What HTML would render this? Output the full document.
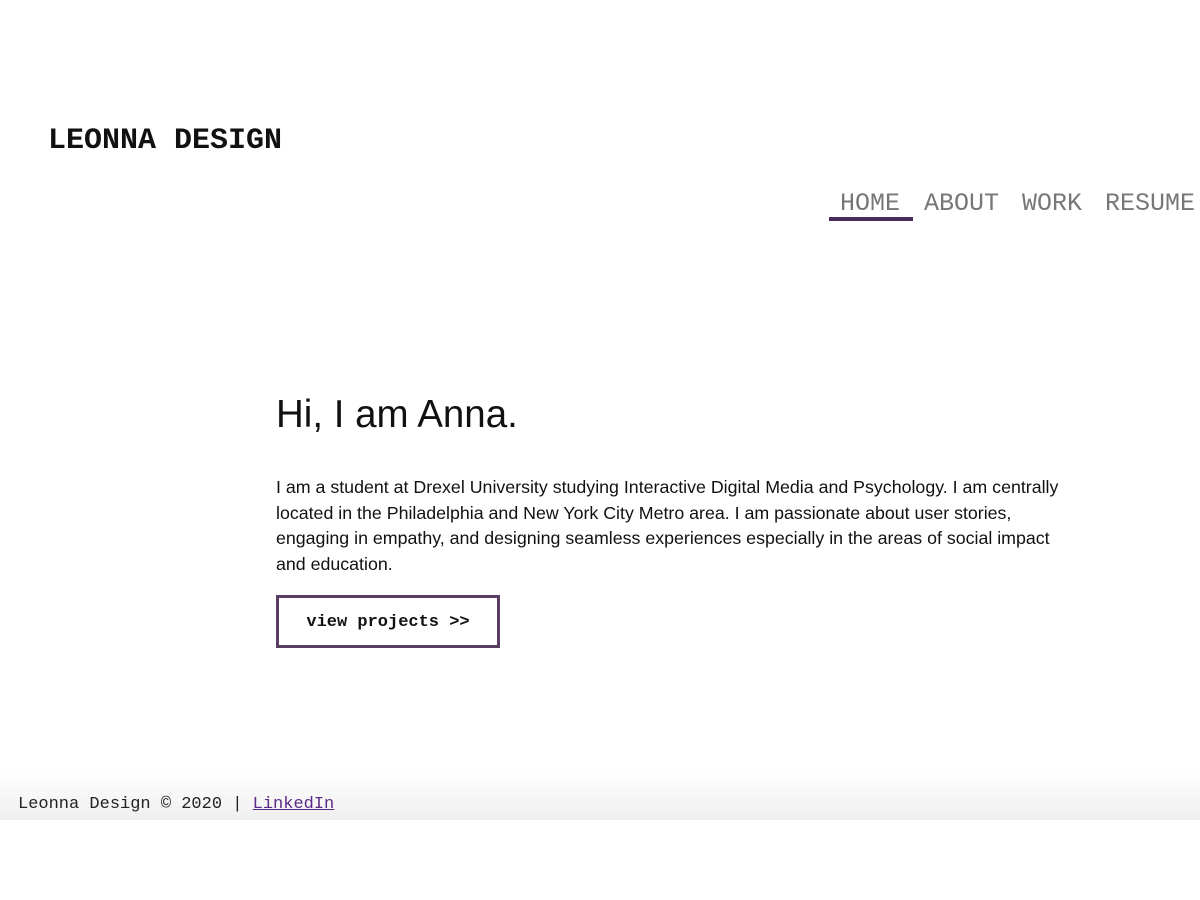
<!DOCTYPE html>
<html><head><style>
body{margin:0;width:1200px;height:900px;background:#fff;position:relative;overflow:hidden;font-family:"Liberation Sans",sans-serif}
.logo{position:absolute;left:48px;top:121px;font:bold 30px/40px "Liberation Mono",monospace;color:#111}
.nav a{position:absolute;top:187px;font:25px/34px "Liberation Mono",monospace;color:#777;text-decoration:none;white-space:pre}
.ul{position:absolute;left:829px;top:217px;width:84px;height:4px;background:#4a2a57}
h1{position:absolute;left:276px;top:393px;margin:0;font-size:38.5px;font-weight:500;line-height:44px;color:#111}
p{position:absolute;left:276px;top:475px;margin:0;width:795px;font-size:17.8px;line-height:25.5px;color:#111}
.btn{position:absolute;left:276px;top:595px;width:218px;height:47px;border:3px solid #5a3d63;font:bold 17px/49px "Liberation Mono",monospace;text-align:center;color:#111}
.foot{position:absolute;left:0;top:770px;width:1200px;height:50px;background:linear-gradient(to bottom,#fff,#efefef)}
.ft{position:absolute;left:18px;top:793px;font:17px/24px "Liberation Mono",monospace;color:#222}
.ft a{color:#5b2a86}
</style></head><body>
<div class="logo">LEONNA DESIGN</div>
<div class="nav"><a style="left:840px">HOME</a><a style="left:924px">ABOUT</a><a style="left:1022px">WORK</a><a style="left:1105px">RESUME</a></div>
<div class="ul"></div>
<h1>Hi, I am Anna.</h1>
<p>I am a student at Drexel University studying Interactive Digital Media and Psychology. I am centrally located in the Philadelphia and New York City Metro area. I am passionate about user stories, engaging in empathy, and designing seamless experiences especially in the areas of social impact and education.</p>
<div class="btn">view projects &gt;&gt;</div>
<div class="foot"></div>
<div class="ft">Leonna Design © 2020 | <a href="#">LinkedIn</a></div>
</body></html>
